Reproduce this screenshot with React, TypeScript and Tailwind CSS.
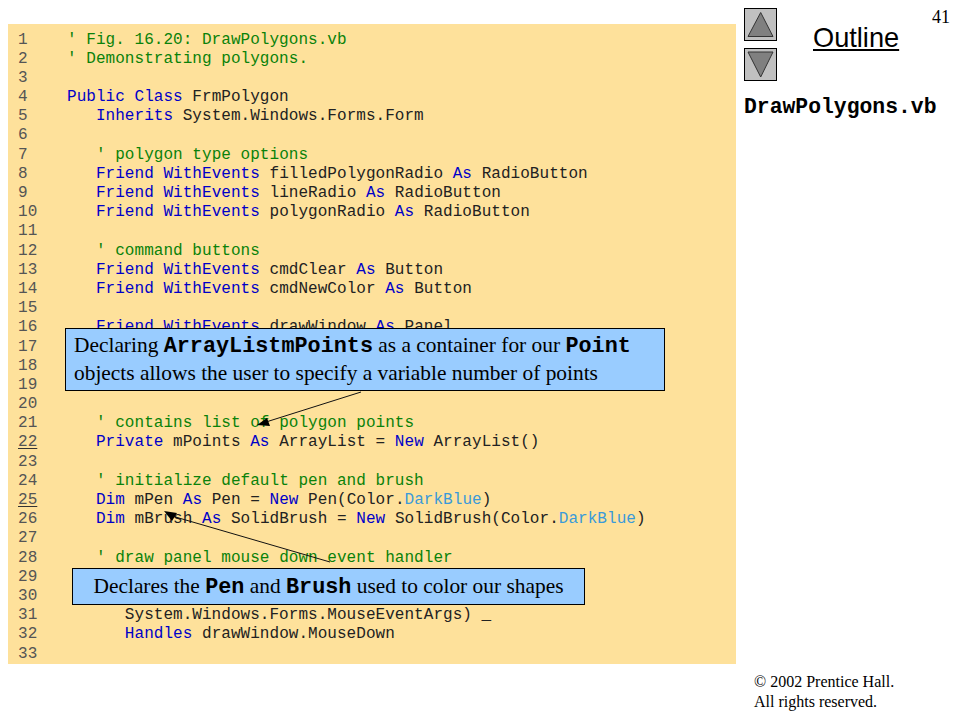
import { ReactNode } from 'react';

const K = ({ children }: { children: ReactNode }) => <span className="text-[#0000c8]">{children}</span>;
const C = ({ children }: { children: ReactNode }) => <span className="text-[#0a820a]">{children}</span>;
const L = ({ children }: { children: ReactNode }) => <span className="text-[#3a9ad9]">{children}</span>;

const lines: ReactNode[] = [
  <C>' Fig. 16.20: DrawPolygons.vb</C>,
  <C>' Demonstrating polygons.</C>,
  '',
  <><K>Public Class</K> FrmPolygon</>,
  <>   <K>Inherits</K> System.Windows.Forms.Form</>,
  '',
  <>   <C>' polygon type options</C></>,
  <>   <K>Friend WithEvents</K> filledPolygonRadio <K>As</K> RadioButton</>,
  <>   <K>Friend WithEvents</K> lineRadio <K>As</K> RadioButton</>,
  <>   <K>Friend WithEvents</K> polygonRadio <K>As</K> RadioButton</>,
  '',
  <>   <C>' command buttons</C></>,
  <>   <K>Friend WithEvents</K> cmdClear <K>As</K> Button</>,
  <>   <K>Friend WithEvents</K> cmdNewColor <K>As</K> Button</>,
  '',
  <>   <K>Friend WithEvents</K> drawWindow <K>As</K> Panel</>,
  '',
  '',
  '',
  '',
  <>   <C>' contains list of polygon points</C></>,
  <>   <K>Private</K> mPoints <K>As</K> ArrayList = <K>New</K> ArrayList()</>,
  '',
  <>   <C>' initialize default pen and brush</C></>,
  <>   <K>Dim</K> mPen <K>As</K> Pen = <K>New</K> Pen(Color.<L>DarkBlue</L>)</>,
  <>   <K>Dim</K> mBrush <K>As</K> SolidBrush = <K>New</K> SolidBrush(Color.<L>DarkBlue</L>)</>,
  '',
  <>   <C>' draw panel mouse down event handler</C></>,
  '',
  '',
  <>      System.Windows.Forms.MouseEventArgs) _</>,
  <>      <K>Handles</K> drawWindow.MouseDown</>,
  '',
];

const underlined = [22, 25];

function Code() {
  return (
    <div className="w-[728px] h-[640px] bg-[#fee19b] pt-[6.5px] pl-[10px] font-['Liberation_Mono',monospace] text-[16px] tracking-[0.04px] leading-[19.19px] text-[#222]">
      {lines.map((line, i) => (
        <div key={i} className="flex h-[19.19px] whitespace-pre">
          <span className="w-[49px] text-[#555]">
            <span className={underlined.includes(i + 1) ? 'underline underline-offset-2 decoration-[#333]' : ''}>{i + 1}</span>
          </span>
          <span>{line}</span>
        </div>
      ))}
    </div>
  );
}

function ArrowButton({ up }: { up?: boolean }) {
  return (
    <div className="w-[33px] h-[33px] border border-black bg-[#c0c0c0]">
      <svg width="31" height="31" viewBox="0 0 31 31">
        <polygon points={up ? '15.7,3.5 28,27.5 3,27.5' : '3,3 28,3 15.7,28'} fill="#808080" stroke="#333" strokeWidth="1" />
      </svg>
    </div>
  );
}

const Mono = ({ children }: { children: ReactNode }) => (
  <b className="font-['Liberation_Mono',monospace] font-bold text-[21.8px]">{children}</b>
);

export default function App() {
  return (
    <div className="relative w-[960px] h-[720px] bg-white flex overflow-hidden font-['Liberation_Serif',serif] text-black">
      <div className="pl-2 pt-6">
        <Code />
      </div>

      <div className="flex flex-col w-[224px] pl-2 pt-2">
        <div className="flex">
          <div className="flex flex-col gap-[7px]">
            <ArrowButton up />
            <ArrowButton />
          </div>
          <div className="ml-9 mt-[12px] h-[36px] font-['Liberation_Sans',sans-serif] text-[27.2px] leading-[36px] underline decoration-2 underline-offset-2">
            Outline
          </div>
          <div className="ml-auto mr-[10px] text-[18px] leading-[18px]">41</div>
        </div>
        <div className="mt-[15px] font-['Liberation_Mono',monospace] font-bold text-[21.4px] leading-[22px]">DrawPolygons.vb</div>
        <div className="mt-auto mb-[8px] ml-[10px] text-[16px] leading-[20px]">
          <div>© 2002 Prentice Hall.</div>
          <div>All rights reserved.</div>
        </div>
      </div>

      {/* callouts sit over the code */}
      <div className="absolute left-[65px] top-[328px] w-[600px] h-[63px] border border-black bg-[#99ccff] px-[8px] pt-[3px] text-[21.4px] leading-[27px] whitespace-nowrap">
        <div>Declaring <Mono>ArrayListmPoints</Mono> as a container for our <Mono>Point</Mono></div>
        <div>objects allows the user to specify a variable number of points</div>
      </div>
      <div className="absolute left-[72px] top-[568px] w-[513px] h-[37px] border border-black bg-[#99ccff] text-[21.4px] leading-[35px] text-center whitespace-nowrap">
        Declares the <Mono>Pen</Mono> and <Mono>Brush</Mono> used to color our shapes
      </div>

      {/* pointer arrows */}
      <svg className="absolute left-0 top-0 pointer-events-none" width="960" height="720">
        <line x1="361" y1="392" x2="266" y2="422" stroke="#111" strokeWidth="1" />
        <polygon points="257,425 267,418 270,426" fill="#000" />
        <line x1="330" y1="562" x2="172" y2="516" stroke="#111" strokeWidth="1" />
        <polygon points="164,511 177,513 172,521" fill="#000" />
      </svg>
    </div>
  );
}
